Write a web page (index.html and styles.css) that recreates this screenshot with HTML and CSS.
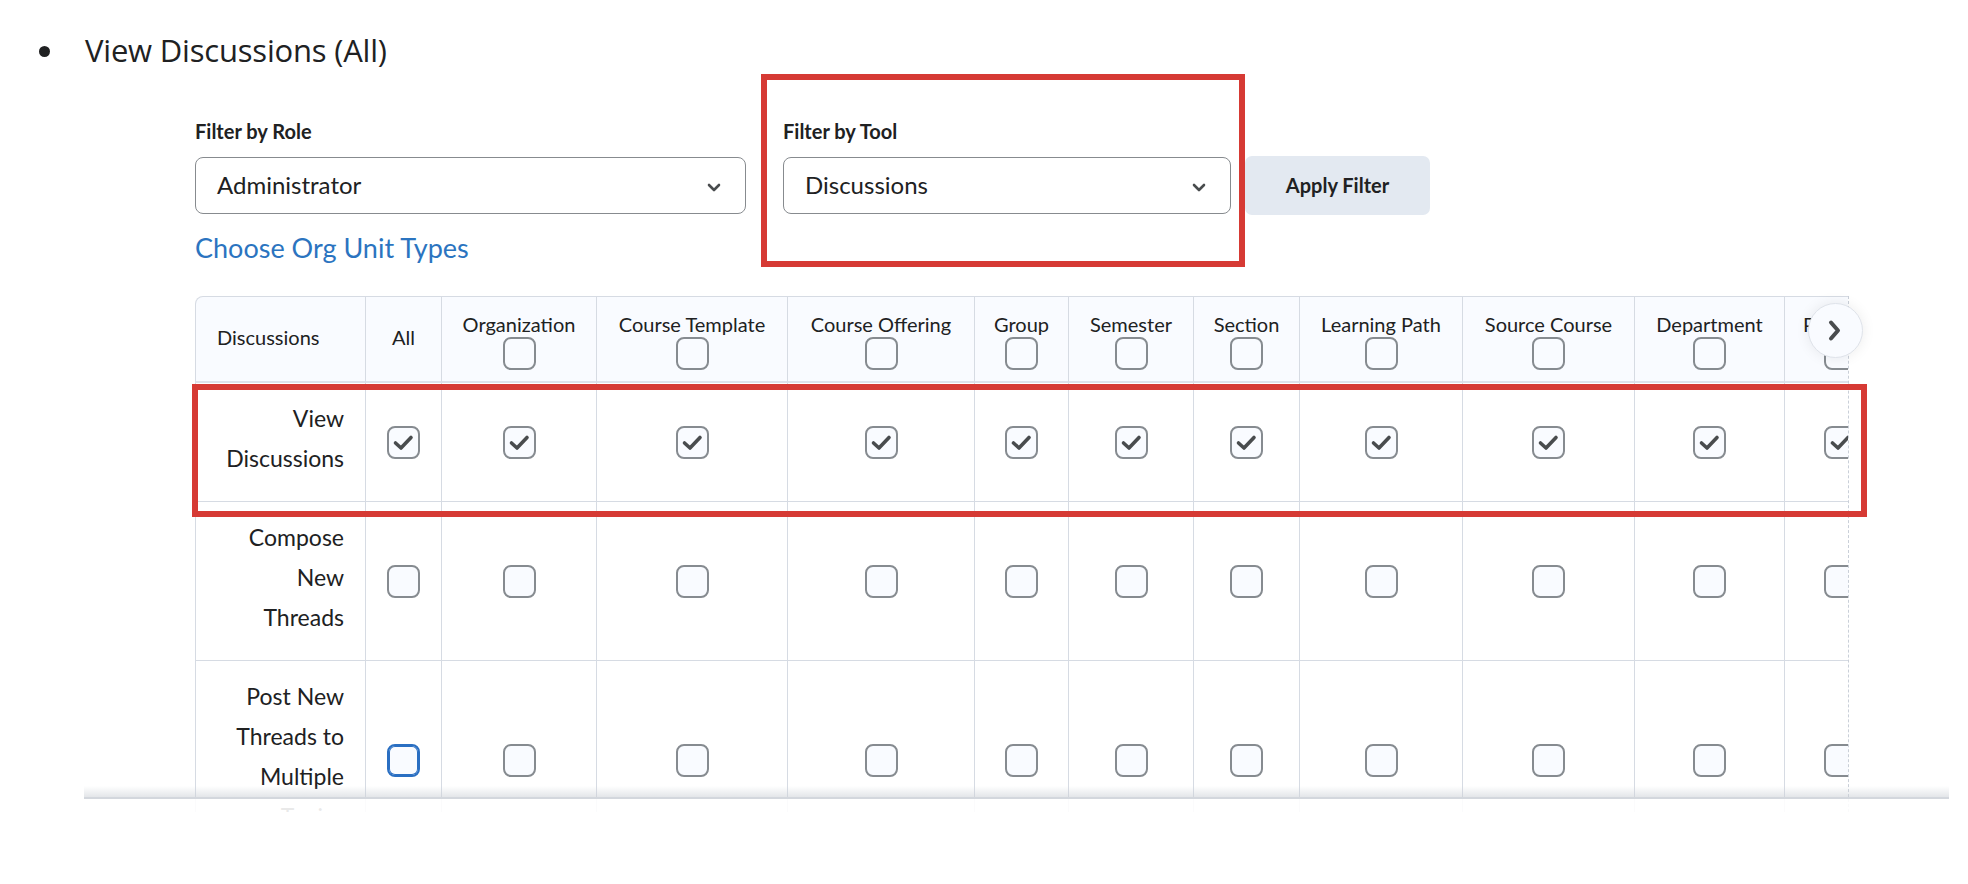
FILE: index.html
```html
<!DOCTYPE html>
<html lang="en">
<head>
<meta charset="utf-8">
<title>Permissions – View Discussions</title>
<link rel="stylesheet" href="styles.css">
</head>
<body>
<main class="page">
  <ul class="steps">
    <li class="step">View Discussions (All)</li>
  </ul>

  <section class="perm-panel">
    <div class="filters">
      <div class="field field-role">
        <label class="field-label">Filter by Role</label>
        <div class="select">
          <span>Administrator</span>
          <svg class="chev" width="14" height="9" viewBox="0 0 14 9"><polyline points="2,2 7,7 12,2" fill="none" stroke="#494c4e" stroke-width="2.6" stroke-linecap="round" stroke-linejoin="round"/></svg>
        </div>
      </div>
      <div class="field field-tool">
        <label class="field-label">Filter by Tool</label>
        <div class="select">
          <span>Discussions</span>
          <svg class="chev" width="14" height="9" viewBox="0 0 14 9"><polyline points="2,2 7,7 12,2" fill="none" stroke="#494c4e" stroke-width="2.6" stroke-linecap="round" stroke-linejoin="round"/></svg>
        </div>
        <span class="callout callout-tool"></span>
      </div>
      <button class="btn-apply" type="button">Apply Filter</button>
    </div>

    <a class="org-link" href="#">Choose Org Unit Types</a>

    <div class="grid-area">
      <div class="grid-scroll">
        <table class="grid">
          <colgroup>
            <col style="width:171px"><col style="width:76px"><col style="width:155px"><col style="width:191px">
            <col style="width:187px"><col style="width:94px"><col style="width:125px"><col style="width:106px">
            <col style="width:163px"><col style="width:172px"><col style="width:150px"><col style="width:111px">
          </colgroup>
          <thead>
            <tr>
              <th class="h-tool">Discussions</th>
              <th class="h-all">All</th>
              <th><div class="h-type"><span>Organization</span><span class="cb"></span></div></th>
              <th><div class="h-type"><span>Course Template</span><span class="cb"></span></div></th>
              <th><div class="h-type"><span>Course Offering</span><span class="cb"></span></div></th>
              <th><div class="h-type"><span>Group</span><span class="cb"></span></div></th>
              <th><div class="h-type"><span>Semester</span><span class="cb"></span></div></th>
              <th><div class="h-type"><span>Section</span><span class="cb"></span></div></th>
              <th><div class="h-type"><span>Learning Path</span><span class="cb"></span></div></th>
              <th><div class="h-type"><span>Source Course</span><span class="cb"></span></div></th>
              <th><div class="h-type"><span>Department</span><span class="cb"></span></div></th>
              <th><div class="h-type"><span>Program</span><span class="cb"></span></div></th>
            </tr>
          </thead>
          <tbody>
            <tr>
              <td class="perm">View Discussions</td>
              <td class="cell"><span class="cb"><svg width="29" height="29" viewBox="0 0 29 29"><polyline points="6.5,15 12,20 22,9.5" fill="none" stroke="#494c4e" stroke-width="3.6" stroke-linecap="round" stroke-linejoin="round"/></svg></span></td>
              <td class="cell"><span class="cb"><svg width="29" height="29" viewBox="0 0 29 29"><polyline points="6.5,15 12,20 22,9.5" fill="none" stroke="#494c4e" stroke-width="3.6" stroke-linecap="round" stroke-linejoin="round"/></svg></span></td>
              <td class="cell"><span class="cb"><svg width="29" height="29" viewBox="0 0 29 29"><polyline points="6.5,15 12,20 22,9.5" fill="none" stroke="#494c4e" stroke-width="3.6" stroke-linecap="round" stroke-linejoin="round"/></svg></span></td>
              <td class="cell"><span class="cb"><svg width="29" height="29" viewBox="0 0 29 29"><polyline points="6.5,15 12,20 22,9.5" fill="none" stroke="#494c4e" stroke-width="3.6" stroke-linecap="round" stroke-linejoin="round"/></svg></span></td>
              <td class="cell"><span class="cb"><svg width="29" height="29" viewBox="0 0 29 29"><polyline points="6.5,15 12,20 22,9.5" fill="none" stroke="#494c4e" stroke-width="3.6" stroke-linecap="round" stroke-linejoin="round"/></svg></span></td>
              <td class="cell"><span class="cb"><svg width="29" height="29" viewBox="0 0 29 29"><polyline points="6.5,15 12,20 22,9.5" fill="none" stroke="#494c4e" stroke-width="3.6" stroke-linecap="round" stroke-linejoin="round"/></svg></span></td>
              <td class="cell"><span class="cb"><svg width="29" height="29" viewBox="0 0 29 29"><polyline points="6.5,15 12,20 22,9.5" fill="none" stroke="#494c4e" stroke-width="3.6" stroke-linecap="round" stroke-linejoin="round"/></svg></span></td>
              <td class="cell"><span class="cb"><svg width="29" height="29" viewBox="0 0 29 29"><polyline points="6.5,15 12,20 22,9.5" fill="none" stroke="#494c4e" stroke-width="3.6" stroke-linecap="round" stroke-linejoin="round"/></svg></span></td>
              <td class="cell"><span class="cb"><svg width="29" height="29" viewBox="0 0 29 29"><polyline points="6.5,15 12,20 22,9.5" fill="none" stroke="#494c4e" stroke-width="3.6" stroke-linecap="round" stroke-linejoin="round"/></svg></span></td>
              <td class="cell"><span class="cb"><svg width="29" height="29" viewBox="0 0 29 29"><polyline points="6.5,15 12,20 22,9.5" fill="none" stroke="#494c4e" stroke-width="3.6" stroke-linecap="round" stroke-linejoin="round"/></svg></span></td>
              <td class="cell"><span class="cb"><svg width="29" height="29" viewBox="0 0 29 29"><polyline points="6.5,15 12,20 22,9.5" fill="none" stroke="#494c4e" stroke-width="3.6" stroke-linecap="round" stroke-linejoin="round"/></svg></span></td>
            </tr>
            <tr>
              <td class="perm">Compose<br>New<br>Threads</td>
              <td class="cell"><span class="cb"></span></td>
              <td class="cell"><span class="cb"></span></td>
              <td class="cell"><span class="cb"></span></td>
              <td class="cell"><span class="cb"></span></td>
              <td class="cell"><span class="cb"></span></td>
              <td class="cell"><span class="cb"></span></td>
              <td class="cell"><span class="cb"></span></td>
              <td class="cell"><span class="cb"></span></td>
              <td class="cell"><span class="cb"></span></td>
              <td class="cell"><span class="cb"></span></td>
              <td class="cell"><span class="cb"></span></td>
            </tr>
            <tr>
              <td class="perm">Post New<br>Threads to<br>Multiple<br>Topics</td>
              <td class="cell"><span class="cb cb-focus"></span></td>
              <td class="cell"><span class="cb"></span></td>
              <td class="cell"><span class="cb"></span></td>
              <td class="cell"><span class="cb"></span></td>
              <td class="cell"><span class="cb"></span></td>
              <td class="cell"><span class="cb"></span></td>
              <td class="cell"><span class="cb"></span></td>
              <td class="cell"><span class="cb"></span></td>
              <td class="cell"><span class="cb"></span></td>
              <td class="cell"><span class="cb"></span></td>
              <td class="cell"><span class="cb"></span></td>
            </tr>
          </tbody>
        </table>
      </div>

      <button class="scroll-next" type="button" aria-label="Scroll right">
        <svg width="53" height="53" viewBox="0 0 53 53"><polyline points="22,18.5 29,26.5 22,34.5" fill="none" stroke="#494c4e" stroke-width="4" stroke-linecap="round" stroke-linejoin="round"/></svg>
      </button>
      <span class="callout callout-row"></span>
    </div>
  </section>

  <div class="page-edge"></div>
</main>
</body>
</html>
```

FILE: styles.css
```css
* {
  box-sizing: border-box;
}

html,
body {
  margin: 0;
  padding: 0;
  background: #ffffff;
}

body {
  width: 1968px;
  height: 884px;
  overflow: hidden;
  font-family: Lato, "Noto Sans", sans-serif;
  color: #202122;
}

.page {
  position: relative;
  height: 884px;
}

/* bulleted step heading */
.steps {
  list-style: none;
  margin: 0;
  padding: 30px 0 0 39px;
}

.step {
  display: flex;
  align-items: center;
  gap: 35px;
  font-family: "Open Sans", "Noto Sans", sans-serif;
  font-size: 31px;
  line-height: 40px;
  letter-spacing: -0.2px;
  color: #202122;
}

.step::before {
  content: "";
  flex: none;
  width: 11px;
  height: 11px;
  margin-top: 2px;
  border-radius: 50%;
  background: #202122;
}

/* permissions panel */
.perm-panel {
  padding-left: 195px;
  margin-top: 50px;
}

.filters {
  display: flex;
  align-items: flex-end;
}

.field {
  display: flex;
  flex-direction: column;
}

.field-role {
  width: 551px;
  margin-right: 37px;
}

.field-tool {
  position: relative;
  width: 448px;
  margin-right: 14px;
}

.field-label {
  font-size: 20px;
  font-weight: 700;
  line-height: 22px;
  margin-bottom: 15px;
  color: #202122;
}

.select {
  height: 57px;
  display: flex;
  align-items: center;
  justify-content: space-between;
  padding: 0 24px 3px 21px;
  border: 1px solid #878b8f;
  border-radius: 8px;
  background: #ffffff;
  font-size: 24px;
  color: #202122;
}

.chev {
  display: block;
  margin-top: 6px;
}

.btn-apply {
  width: 185px;
  height: 59px;
  margin-bottom: -1px;
  padding-bottom: 2px;
  border: 0;
  border-radius: 7px;
  background: #e3e9f1;
  font-family: Lato, sans-serif;
  font-size: 20px;
  font-weight: 700;
  color: #202122;
}

.org-link {
  display: block;
  width: max-content;
  margin-top: 19px;
  font-size: 27px;
  line-height: 30px;
  color: #2b74c0;
  text-decoration: none;
}

/* highlight frames */
.callout {
  position: absolute;
  border: 6px solid #d63a34;
  pointer-events: none;
}

.callout-tool {
  left: -22px;
  right: -14px;
  top: -46px;
  bottom: -53px;
}

.callout-row {
  left: -3px;
  top: 88px;
  width: 1675px;
  height: 133px;
}

/* permission grid */
.grid-area {
  position: relative;
  width: 1654px;
  margin-top: 33px;
}

.grid-scroll {
  width: 1654px;
  height: 516px;
  overflow: hidden;
  border-right: 1px dashed #c9cfd8;
}

.grid {
  table-layout: fixed;
  width: 1701px;
  border-collapse: separate;
  border-spacing: 0;
}

.grid th,
.grid td {
  border-right: 1px solid #d6dbe3;
  border-bottom: 1px solid #d6dbe3;
}

.grid th:first-child,
.grid td:first-child {
  border-left: 1px solid #d6dbe3;
}

.grid th {
  height: 87px;
  padding: 0 6px;
  border-top: 1px solid #d6dbe3;
  border-bottom: 2px solid #dde2ea;
  background: #f9fbff;
  font-size: 20px;
  font-weight: 400;
  line-height: 20px;
  text-align: center;
  vertical-align: middle;
  white-space: nowrap;
  color: #202122;
}

.grid th.h-tool {
  text-align: left;
  padding-left: 21px;
  padding-bottom: 4px;
  border-top-left-radius: 8px;
}

.grid th.h-all {
  padding-bottom: 4px;
}

.h-type {
  display: flex;
  flex-direction: column;
  align-items: center;
  padding-top: 6px;
}

.h-type .cb {
  margin-top: 3px;
}

.grid td.perm {
  padding: 15px 21px 23px 14px;
  font-size: 23px;
  line-height: 40px;
  text-align: right;
  vertical-align: middle;
  color: #202122;
}

.grid td.cell {
  padding: 0;
  font-size: 0;
  line-height: 0;
  vertical-align: middle;
}

.cb {
  display: block;
  width: 33px;
  height: 33px;
  margin: 0 auto;
  border: 2px solid #868b90;
  border-radius: 8px;
  background: #f9fbff;
}

.cb svg {
  display: block;
}

.cb-focus {
  border-color: #2a6fc2;
  box-shadow: inset 0 0 0 1px #2a6fc2;
}

.scroll-next {
  position: absolute;
  left: 1613px;
  top: 7px;
  width: 55px;
  height: 55px;
  padding: 0;
  border: 1px solid #dfe3ea;
  border-radius: 50%;
  background: #f9fbff;
  box-shadow: 0 0 14px rgba(0, 0, 0, 0.08);
}

.scroll-next svg {
  display: block;
}

.page-edge {
  position: absolute;
  left: 84px;
  top: 786px;
  width: 1865px;
  height: 30px;
  background: linear-gradient(
    to bottom,
    rgba(255, 255, 255, 0) 0,
    rgba(205, 209, 215, 0.55) 11px,
    #d3d7dd 11px,
    #d3d7dd 13px,
    rgba(255, 255, 255, 0.9) 13px,
    rgba(255, 255, 255, 0.9) 100%
  );
}
```
